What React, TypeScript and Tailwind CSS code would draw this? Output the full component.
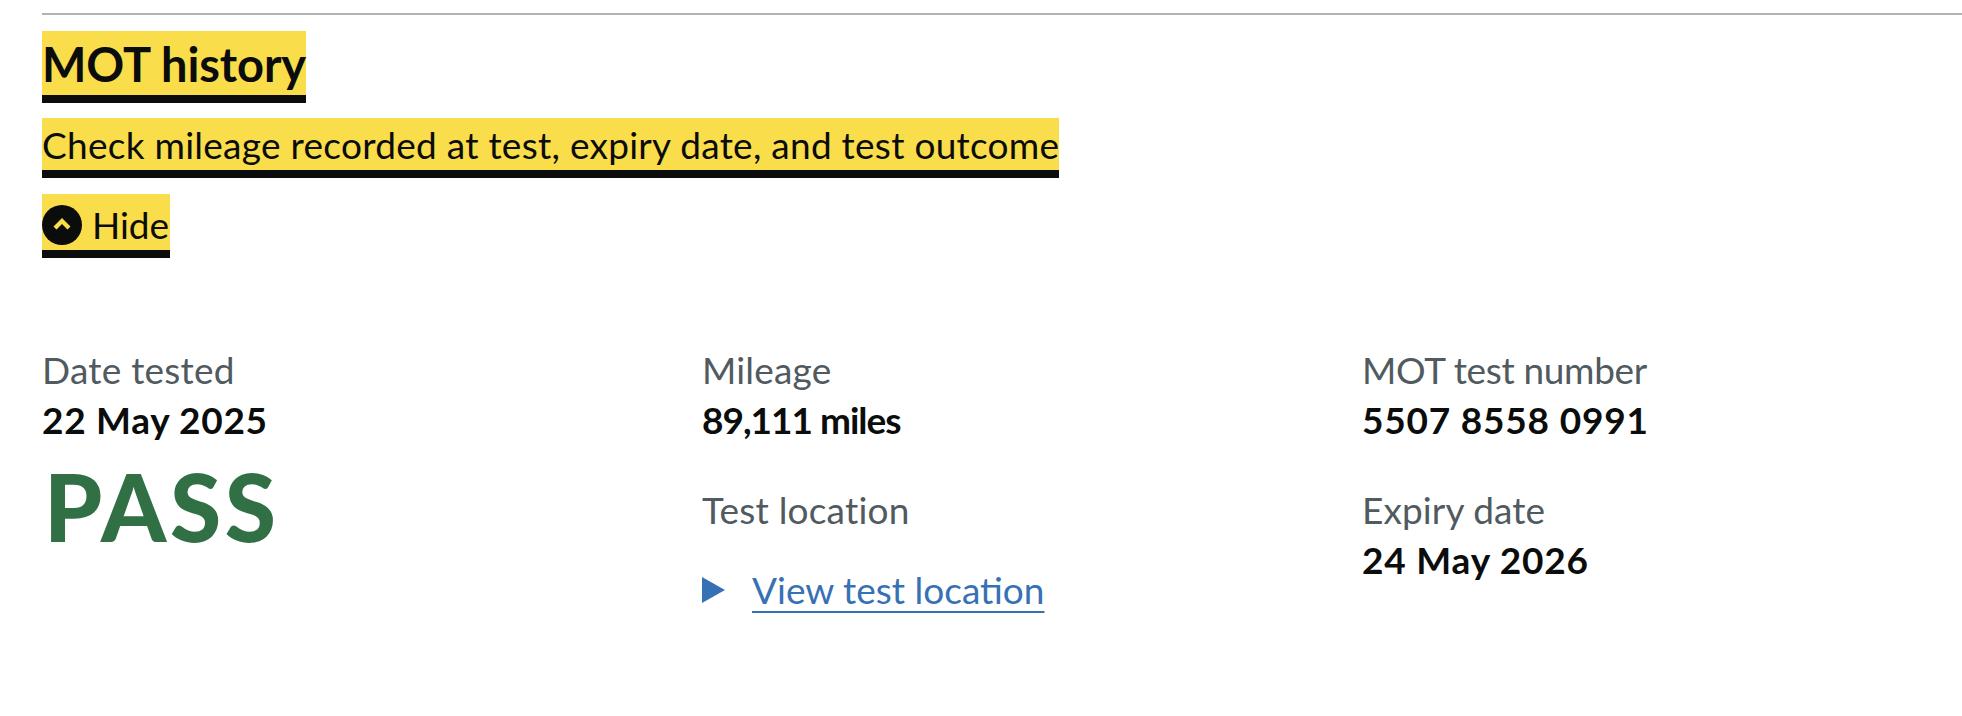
import clsx from "clsx";

const labelClass = "block text-[37px] leading-[50px] text-[#505a5f]";
const valueClass = "block text-[37px] leading-[50px] font-bold text-[#0b0c0c]";

interface FieldProps {
  label: string;
  value: string;
  labelTracking: string;
  valueTracking: string;
  className?: string;
}

const Field = ({ label, value, labelTracking, valueTracking, className }: FieldProps) => (
  <div className={className}>
    <span className={clsx(labelClass, labelTracking)}>{label}</span>
    <span className={clsx(valueClass, valueTracking)}>{value}</span>
  </div>
);

const ChevronCircle = () => (
  <svg width="40" height="40" viewBox="0 0 40 40" className="shrink-0">
    <circle cx="20" cy="20" r="20" fill="#0b0c0c" />
    <polygon points="20,13 28.5,21.5 25.5,24.5 20,19 14.5,24.5 11.5,21.5" fill="#fadd4a" />
  </svg>
);

export default function App() {
  return (
    <div className="min-h-[716px] overflow-hidden bg-white pt-[13px] font-['Lato',sans-serif] text-[#0b0c0c]">
      <div className="ml-[42px] h-[2px] bg-[#b1b4b6]" />

      <div className="ml-[42px] mt-[16px] flex flex-col items-start">
        <h2 className="flex h-[72px] items-center border-b-8 border-[#0b0c0c] bg-[#fadd4a] pt-[2px] text-[47px] font-bold tracking-[-0.1px]">
          MOT history
        </h2>
        <p className="mt-[15px] flex h-[60px] items-center border-b-8 border-[#0b0c0c] bg-[#fadd4a] pt-[2px] text-[37px] tracking-[0.27px]">
          Check mileage recorded at test, expiry date, and test outcome
        </p>
        <button className="mt-[16px] flex h-[64px] w-[128px] items-center gap-[10px] border-b-8 border-[#0b0c0c] bg-[#fadd4a] pt-[6px] text-[37px]">
          <ChevronCircle />
          <span>Hide</span>
        </button>
      </div>

      <div className="ml-[42px] mt-[87px] grid grid-cols-[660px_660px_1fr]">
        <div>
          <Field label="Date tested" value="22 May 2025" labelTracking="tracking-[0.23px]" valueTracking="tracking-[0.7px]" />
          <div className="mt-[6px] pl-[2px] text-[93px] leading-[110px] font-black tracking-[3.5px] text-[#317044]">PASS</div>
        </div>
        <div>
          <Field label="Mileage" value="89,111 miles" labelTracking="tracking-[0.2px]" valueTracking="tracking-[-1px]" />
          <span className={clsx(labelClass, "mt-[40px] tracking-[0.2px]")}>Test location</span>
          <div className="mt-[30px] flex items-center gap-[27px]">
            <svg width="23" height="26" viewBox="0 0 23 26" className="shrink-0">
              <polygon points="0,0 23,13 0,26" fill="#3771b5" />
            </svg>
            <a href="#" className="text-[37px] leading-[50px] text-[#3771b5] underline decoration-2 underline-offset-[7px]">
              View test location
            </a>
          </div>
        </div>
        <div>
          <Field label="MOT test number" value="5507 8558 0991" labelTracking="tracking-[-0.33px]" valueTracking="tracking-[0.8px]" />
          <Field label="Expiry date" value="24 May 2026" labelTracking="tracking-[0.1px]" valueTracking="tracking-[0.8px]" className="mt-[40px]" />
        </div>
      </div>
    </div>
  );
}
